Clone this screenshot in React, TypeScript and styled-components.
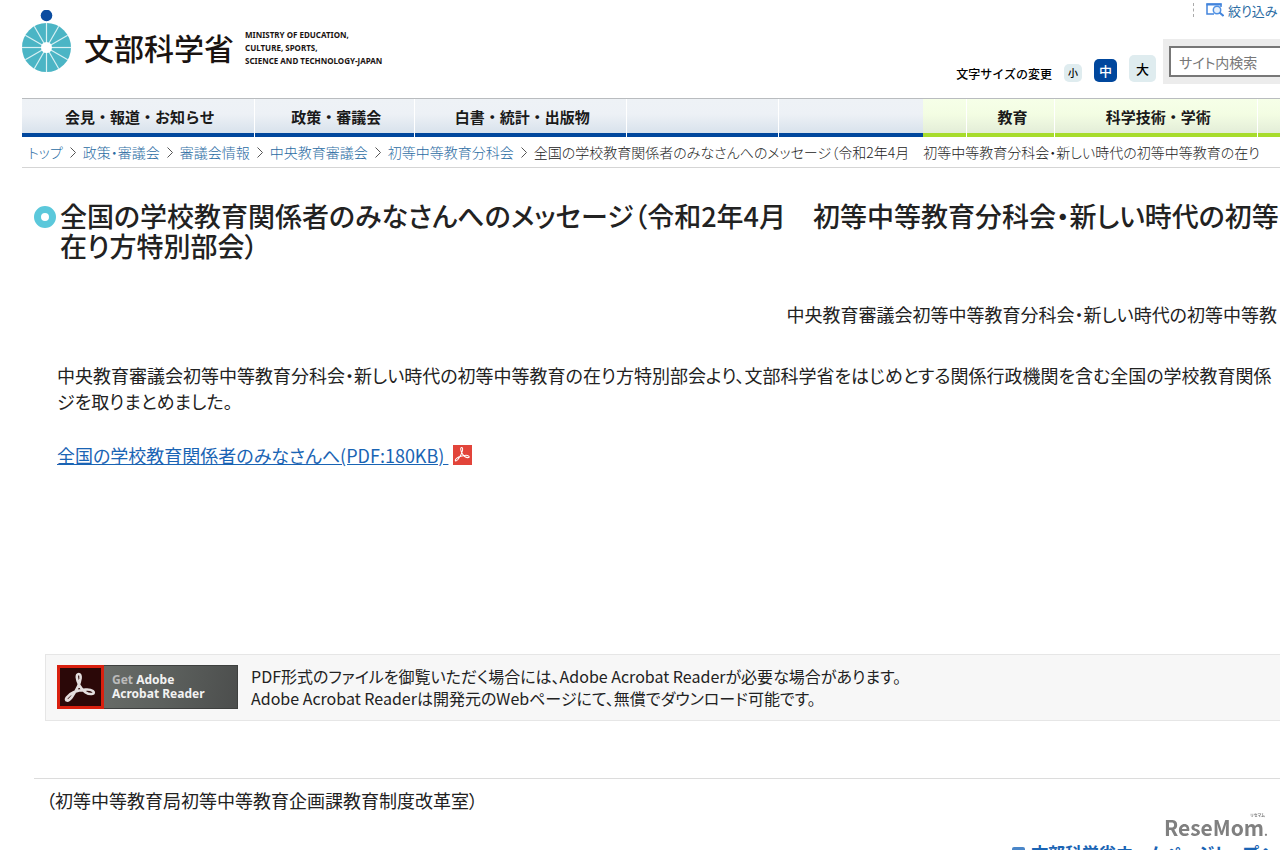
import React from "react";
import styled, { createGlobalStyle } from "styled-components";

const blue = "#00479d";
const linkBlue = "#1a64b4";
const crumbBlue = "#2b6ca3";

const GlobalStyle = createGlobalStyle`
  * { box-sizing: border-box; }
  body {
    margin: 0;
    background: #fff;
    color: #222;
    font-family: "Noto Sans CJK JP", sans-serif;
    font-feature-settings: "palt";
    font-size: 18px;
  }
  a { color: ${linkBlue}; }
  h1, p, ol, ul { margin: 0; padding: 0; }
`;

const Page = styled.div`
  height: 100vh;
  overflow: hidden;
  white-space: nowrap;
`;

const Header = styled.header`
  display: flex;
  justify-content: space-between;
  height: 98px;
  padding-left: 22px;
`;

const Brand = styled.a`
  display: flex;
  align-items: flex-start;
  padding-top: 10px;
  color: #1a1311;
  text-decoration: none;
`;

const BrandName = styled.span`
  margin: 14px 0 0 12px;
  font-size: 30px;
  line-height: 46px;
  font-weight: 500;
  font-feature-settings: normal;
`;

const BrandEnglish = styled.span`
  margin: 18px 0 0 11px;
  font: bold 8px/13px "Noto Sans", sans-serif;
`;

const Tools = styled.div`
  display: flex;
  flex-direction: column;
  align-items: flex-end;
`;

const Refine = styled.a`
  display: flex;
  align-items: center;
  gap: 4px;
  width: 87px;
  height: 14px;
  margin: 3px 0 22px;
  padding-left: 12px;
  border-left: 1px dashed #aaa;
  color: ${crumbBlue};
  font-size: 13px;
  text-decoration: none;
`;

const ToolRow = styled.div`
  display: flex;
  align-items: flex-start;
`;

const SizeGroup = styled.div`
  display: flex;
  align-items: flex-end;
  gap: 12px;
  height: 43px;
  padding-right: 7px;
`;

const SizeLabel = styled.span`
  font-size: 12px;
  line-height: 16px;
  font-weight: 500;
  font-feature-settings: normal;
  color: #000;
`;

const SizeButton = styled.button<{ $size: number; $font: number; $active?: boolean }>`
  width: ${(p) => p.$size}px;
  height: ${(p) => p.$size}px;
  padding: 0;
  border: 0;
  border-radius: 5px;
  background: ${(p) => (p.$active ? blue : "#dfecef")};
  color: ${(p) => (p.$active ? "#fff" : "#000")};
  font-family: inherit;
  font-size: ${(p) => p.$font}px;
  font-weight: 500;
  line-height: ${(p) => p.$size}px;
`;

const Search = styled.form`
  width: 117px;
  padding: 7px 0 7px 6px;
  overflow: hidden;
  background: #ececec;
`;

const SearchInput = styled.input`
  display: block;
  width: 180px;
  height: 31px;
  padding: 0 8px;
  border: 2px solid #777;
  background: #fff;
  font: 14px "Noto Sans CJK JP", sans-serif;
  font-feature-settings: "palt";
  &::placeholder { color: #777; opacity: 1; }
`;

const Nav = styled.nav`
  display: flex;
  height: 39px;
  margin-left: 22px;
  border-top: 1px solid #b9bcbf;
`;

const NavItem = styled.a<{ $grow: number; $green?: boolean; $last?: boolean }>`
  flex: ${(p) => p.$grow} 1 0;
  min-width: 0;
  border-right: ${(p) => (p.$last ? 0 : 1)}px solid #fff;
  background: ${(p) =>
    p.$green
      ? "linear-gradient(#f6ffe8, #f3fde3 40%, #e3edd8 34px, #a7dc2c 34px)"
      : `linear-gradient(#eef2f6, #edf1f6 40%, #d8e2ec 34px, ${blue} 34px)`};
  color: #1a1a1a;
  font-size: 15px;
  font-weight: 700;
  font-feature-settings: normal;
  line-height: 36px;
  text-align: center;
  text-indent: 4px;
  text-decoration: none;
`;

const Breadcrumb = styled.ol`
  display: flex;
  gap: 6px;
  height: 31px;
  margin-left: 22px;
  padding-left: 6px;
  border-bottom: 1px solid #d5d5d5;
  list-style: none;
  font-size: 14px;
  font-weight: 300;
  line-height: 32px;
  a {
    color: ${crumbBlue};
    text-decoration: none;
  }
`;

const Crumb = styled.li`
  display: flex;
  align-items: center;
  gap: 6px;
`;

const Main = styled.main`
  padding-left: 34px;
`;

const Title = styled.h1`
  display: flex;
  gap: 4px;
  padding-top: 33px;
  font-size: 27px;
  font-weight: 500;
  line-height: 30px;
`;

const Ring = styled.span`
  flex: none;
  width: 22px;
  height: 22px;
  margin-top: 5px;
  border: 7px solid #5bc8db;
  border-radius: 50%;
`;

const Author = styled.p`
  display: flex;
  justify-content: flex-end;
  margin-top: 40px;
  padding-right: 3px;
  line-height: 26px;
`;

const Lead = styled.p`
  margin-top: 35px;
  padding-left: 23px;
  line-height: 26px;
`;

const FileLink = styled.p`
  display: flex;
  align-items: center;
  gap: 5px;
  margin-top: 27px;
  padding-left: 23px;
  line-height: 28px;
`;

const ReaderNote = styled.section`
  display: flex;
  align-items: flex-start;
  gap: 13px;
  margin: 185px 0 57px 11px;
  padding: 10px 11px;
  height: 67px;
  border: 1px solid #e6e6e6;
  border-right: 0;
  background: #f7f7f7;
  font-size: 16px;
  line-height: 22px;
`;

const ReaderBadge = styled.a`
  display: flex;
  flex: none;
  align-items: center;
  gap: 8px;
  width: 181px;
  height: 44px;
  border: 1px solid #3e403f;
  border-left: 0;
  background: linear-gradient(100deg, #70746f, #5c605d 60%, #4c4e4d);
  color: #f2f2f2;
  font: bold 12px/14px "Noto Sans", sans-serif;
  text-decoration: none;
`;

const Faint = styled.span`
  color: #bbb;
`;

const Division = styled.p`
  padding: 7px 0 0 12px;
  border-top: 1px solid #dcdcdc;
  line-height: 28px;
`;

const HomeLink = styled.a`
  display: flex;
  align-items: center;
  justify-content: flex-end;
  gap: 6px;
  margin-top: 21px;
  padding-right: 5px;
  font-size: 17px;
  font-weight: 700;
  line-height: 36px;
  text-decoration: none;
`;

const Square = styled.span`
  width: 13px;
  height: 13px;
  border-radius: 2px;
  background: #4a86c8;
`;

const Watermark = styled.div`
  position: fixed;
  right: 12px;
  bottom: 13px;
  display: flex;
  flex-direction: column;
  align-items: flex-end;
  color: #808080;
  font-size: 21px;
  font-weight: 700;
  line-height: 20px;
`;

const Ruby = styled.span`
  padding-right: 3px;
  font-size: 4px;
  line-height: 4px;
`;

const Dot = styled.span`
  font-size: 12px;
  line-height: 1px;
`;

const spokes = Array.from({ length: 12 }, (_, i) => i * 30);

const Emblem = () => (
  <svg width="50" height="63" viewBox="0 0 50 63" aria-hidden="true">
    <circle cx="24.500" cy="5.500" r="5.800" fill="#0a4ca0" />
    <circle cx="24.500" cy="37.500" r="24.500" fill="#4bb5c5" />
    {spokes.map((a) => (
      <path key={a} d="M24.500 37.500V13" stroke="#d9f1f4" strokeWidth="1.200" transform={`rotate(${a} 24.500 37.500)`} />
    ))}
    <circle cx="24.500" cy="37.500" r="5.500" fill="#fff" />
  </svg>
);

const RefineIcon = () => (
  <svg width="18" height="14" viewBox="0 0 18 14" fill="none" aria-hidden="true">
    <path d="M8 11H1V1H15V4" stroke="#4384dc" strokeWidth="1.500" />
    <path d="M0.500 1.500H15.500" stroke="#4384dc" strokeWidth="2" />
    <circle cx="11" cy="7" r="3.700" fill="#e8f1fb" stroke="#4f91e4" strokeWidth="1.500" />
    <path d="M13.500 9.500L17.500 13" stroke="#4384dc" strokeWidth="2" />
  </svg>
);

const Chevron = () => (
  <svg width="8" height="13" viewBox="0 0 8 13" fill="none" aria-hidden="true">
    <path d="M1.500 1.500L6.500 6.500L1.500 11.500" stroke="#555" />
  </svg>
);

const acrobatPath =
  "M14 5C11.500 5 12 9.500 14.500 14.500C17 19.500 22 22.500 25.500 21.500C28 20.500 25.500 17.500 19.500 18C13 18.500 6.500 21 4 24.500C2 27.500 5 28.500 8 24.500C11.500 19.500 15 12.500 15.500 8.500C15.700 6 15 5 14 5Z";

const PdfIcon = () => (
  <svg width="19" height="20" viewBox="0 0 19 20" role="img" aria-label="PDF">
    <rect width="19" height="20" fill="#e2443a" />
    <path d={acrobatPath} transform="translate(.3 -.4) scale(.6)" fill="none" stroke="#fff" strokeWidth="1.700" />
  </svg>
);

const ReaderIcon = () => (
  <svg width="47" height="44" viewBox="0 0 47 44" aria-hidden="true">
    <rect width="47" height="44" fill="#d9200f" />
    <rect x="3" y="3" width="41" height="38" fill="#2b0808" />
    <path d={acrobatPath} transform="translate(5 3) scale(1.200)" fill="none" stroke="#e4dede" strokeWidth="2.200" />
  </svg>
);

const navItems = [
  { label: "会見・報道・お知らせ", grow: 233 },
  { label: "政策・審議会", grow: 160 },
  { label: "白書・統計・出版物", grow: 212 },
  { label: "", grow: 152 },
  { label: "", grow: 145, last: true },
  { label: "", grow: 43, green: true },
  { label: "教育", grow: 88, green: true },
  { label: "科学技術・学術", grow: 203, green: true },
  { label: "", grow: 22, green: true, last: true },
];

const crumbs = ["トップ", "政策・審議会", "審議会情報", "中央教育審議会", "初等中等教育分科会"];

export default function App() {
  return (
    <Page lang="ja">
      <GlobalStyle />
      <Header>
        <Brand href="#">
          <Emblem />
          <BrandName>文部科学省</BrandName>
          <BrandEnglish>
            MINISTRY OF EDUCATION,
            <br />
            CULTURE, SPORTS,
            <br />
            SCIENCE AND TECHNOLOGY-JAPAN
          </BrandEnglish>
        </Brand>
        <Tools>
          <Refine href="#">
            <RefineIcon />
            絞り込み
          </Refine>
          <ToolRow>
            <SizeGroup>
              <SizeLabel>文字サイズの変更</SizeLabel>
              <SizeButton $size={18} $font={10}>小</SizeButton>
              <SizeButton $size={23} $font={13} $active>中</SizeButton>
              <SizeButton $size={27} $font={13}>大</SizeButton>
            </SizeGroup>
            <Search>
              <SearchInput type="text" aria-label="サイト内検索" placeholder="サイト内検索" />
            </Search>
          </ToolRow>
        </Tools>
      </Header>
      <Nav>
        {navItems.map((n, i) => (
          <NavItem key={i} href="#" $grow={n.grow} $green={n.green} $last={n.last}>
            {n.label}
          </NavItem>
        ))}
      </Nav>
      <Breadcrumb>
        {crumbs.map((c) => (
          <Crumb key={c}>
            <a href="#">{c}</a>
            <Chevron />
          </Crumb>
        ))}
        <Crumb>全国の学校教育関係者のみなさんへのメッセージ（令和2年4月　初等中等教育分科会・新しい時代の初等中等教育の在り</Crumb>
      </Breadcrumb>
      <Main>
        <Title>
          <Ring />
          <span>
            全国の学校教育関係者のみなさんへのメッセージ（令和2年4月　初等中等教育分科会・新しい時代の初等
            <br />
            在り方特別部会）
          </span>
        </Title>
        <Author>中央教育審議会初等中等教育分科会・新しい時代の初等中等教</Author>
        <Lead>
          中央教育審議会初等中等教育分科会・新しい時代の初等中等教育の在り方特別部会より、文部科学省をはじめとする関係行政機関を含む全国の学校教育関係
          <br />
          ジを取りまとめました。
        </Lead>
        <FileLink>
          <a href="#">全国の学校教育関係者のみなさんへ(PDF:180KB)&nbsp;</a>
          <PdfIcon />
        </FileLink>
        <ReaderNote>
          <ReaderBadge href="#">
            <ReaderIcon />
            <span>
              <Faint>Get</Faint> Adobe
              <br />
              Acrobat Reader
            </span>
          </ReaderBadge>
          <p>
            PDF形式のファイルを御覧いただく場合には、Adobe Acrobat Readerが必要な場合があります。
            <br />
            Adobe Acrobat Readerは開発元のWebページにて、無償でダウンロード可能です。
          </p>
        </ReaderNote>
        <Division>（初等中等教育局初等中等教育企画課教育制度改革室）</Division>
        <HomeLink href="#">
          <Square />
          文部科学省ホームページトップへ
        </HomeLink>
      </Main>
      <Watermark>
        <Ruby>リセマム</Ruby>
        <span>
          ReseMom<Dot>.</Dot>
        </span>
      </Watermark>
    </Page>
  );
}
